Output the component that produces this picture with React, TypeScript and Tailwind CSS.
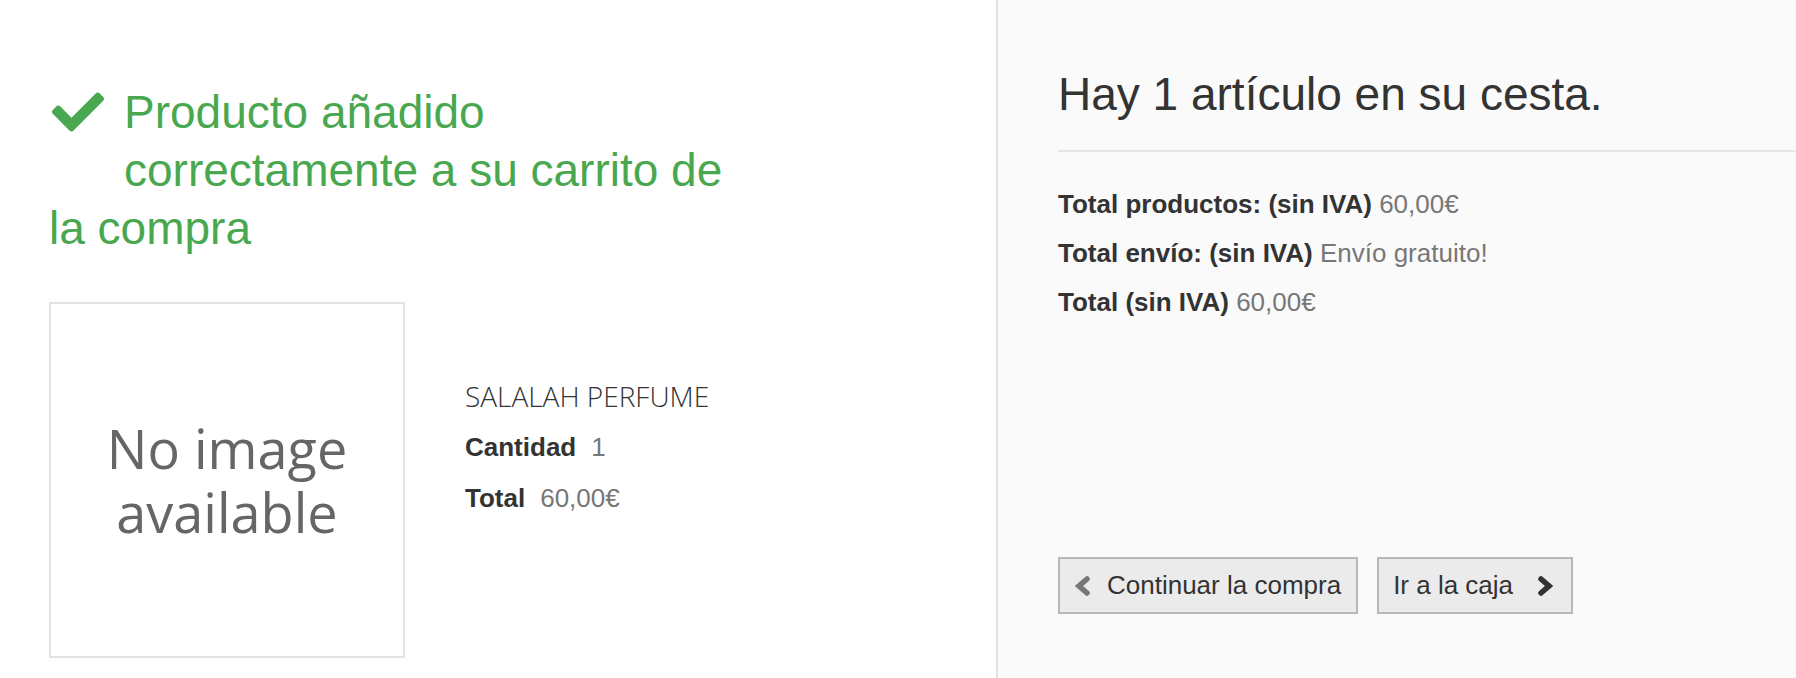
import React from "react";

const sans = "font-['Liberation_Sans',Arial,sans-serif]";
const open = "font-['Open_Sans',sans-serif]";

function CheckIcon() {
  return (
    <svg width="52" height="40" viewBox="0 64 512 384" className="block">
      <path
        fill="#49a84f"
        d="M173.898 439.404l-166.4-166.4c-9.997-9.997-9.997-26.206 0-36.204l36.203-36.204c9.997-9.998 26.207-9.998 36.204 0L192 312.69 432.095 72.596c9.997-9.997 26.207-9.997 36.204 0l36.203 36.204c9.997 9.997 9.997 26.206 0 36.204l-294.4 294.401c-9.998 9.997-26.207 9.997-36.204-.001z"
      />
    </svg>
  );
}

function Chevron({ dir, color }: { dir: "left" | "right"; color: string }) {
  const points = dir === "left" ? "12,4 4,11 12,18" : "4,4 12,11 4,18";
  return (
    <svg width="16" height="22" viewBox="0 0 16 22" className="block shrink-0">
      <polyline
        points={points}
        fill="none"
        stroke={color}
        strokeWidth="5.5"
        strokeLinecap="round"
        strokeLinejoin="miter"
      />
    </svg>
  );
}

export default function App() {
  return (
    <div className={`flex min-h-[678px] w-full bg-white ${sans}`}>
      {/* left: product added */}
      <div className="w-[996px] shrink-0 pl-[49px] pt-[83px]">
        <div className="text-[46px] leading-[58px] text-[#49a84f]">
          <div className="flex items-center">
            <div className="w-[75px] shrink-0 pl-[3px]">
              <CheckIcon />
            </div>
            <span>Producto añadido</span>
          </div>
          <div className="pl-[75px]">correctamente a su carrito de</div>
          <div>la compra</div>
        </div>

        <div className="mt-[45px] flex">
          <div className="flex h-[356px] w-[356px] shrink-0 items-center justify-center border-2 border-[#e3e3e3]">
            <div className={`${open} text-center text-[54px] leading-[64px] text-[#666]`}>
              <div>No image</div>
              <div>available</div>
            </div>
          </div>
          <div className="ml-[60px] pt-[69px] text-[26px] leading-[51px]">
            <div className={`${open} text-[28px] font-light text-[#333]`}>SALALAH PERFUME</div>
            <div className="flex gap-[15px]">
              <span className="font-bold text-[#333]">Cantidad</span>
              <span className="text-[#777]">1</span>
            </div>
            <div className="flex gap-[15px]">
              <span className="font-bold text-[#333]">Total</span>
              <span className="text-[#777]">60,00€</span>
            </div>
          </div>
        </div>
      </div>

      {/* right: cart summary */}
      <div className="flex-1 border-l-2 border-[#e3e3e3] bg-[#fafafa] pl-[60px] pt-[67px]">
        <h2 className="border-b-2 border-[#e5e5e5] pb-[29px] text-[46px] leading-[54px] text-[#333]">
          Hay 1 artículo en su cesta.
        </h2>
        <div className="mt-[28px] text-[26px] leading-[49px]">
          <div>
            <span className="font-bold text-[#333]">Total productos: (sin IVA)</span>{" "}
            <span className="text-[#777]">60,00€</span>
          </div>
          <div>
            <span className="font-bold text-[#333]">Total envío: (sin IVA)</span>{" "}
            <span className="text-[#777]">Envío gratuito!</span>
          </div>
          <div>
            <span className="font-bold text-[#333]">Total (sin IVA)</span>{" "}
            <span className="text-[#777]">60,00€</span>
          </div>
        </div>

        <div className="mt-[230px] flex gap-[19px]">
          <button className="flex h-[57px] items-center gap-[16px] border-2 border-[#b8b8b8] bg-[#ebebeb] pl-[15px] pr-[15px] text-[26px] text-[#333]">
            <Chevron dir="left" color="#777" />
            <span>Continuar la compra</span>
          </button>
          <button className="flex h-[57px] items-center gap-[24px] border-2 border-[#b8b8b8] bg-[#ebebeb] pl-[14px] pr-[18px] text-[26px] text-[#333]">
            <span>Ir a la caja</span>
            <Chevron dir="right" color="#333" />
          </button>
        </div>
      </div>
    </div>
  );
}
